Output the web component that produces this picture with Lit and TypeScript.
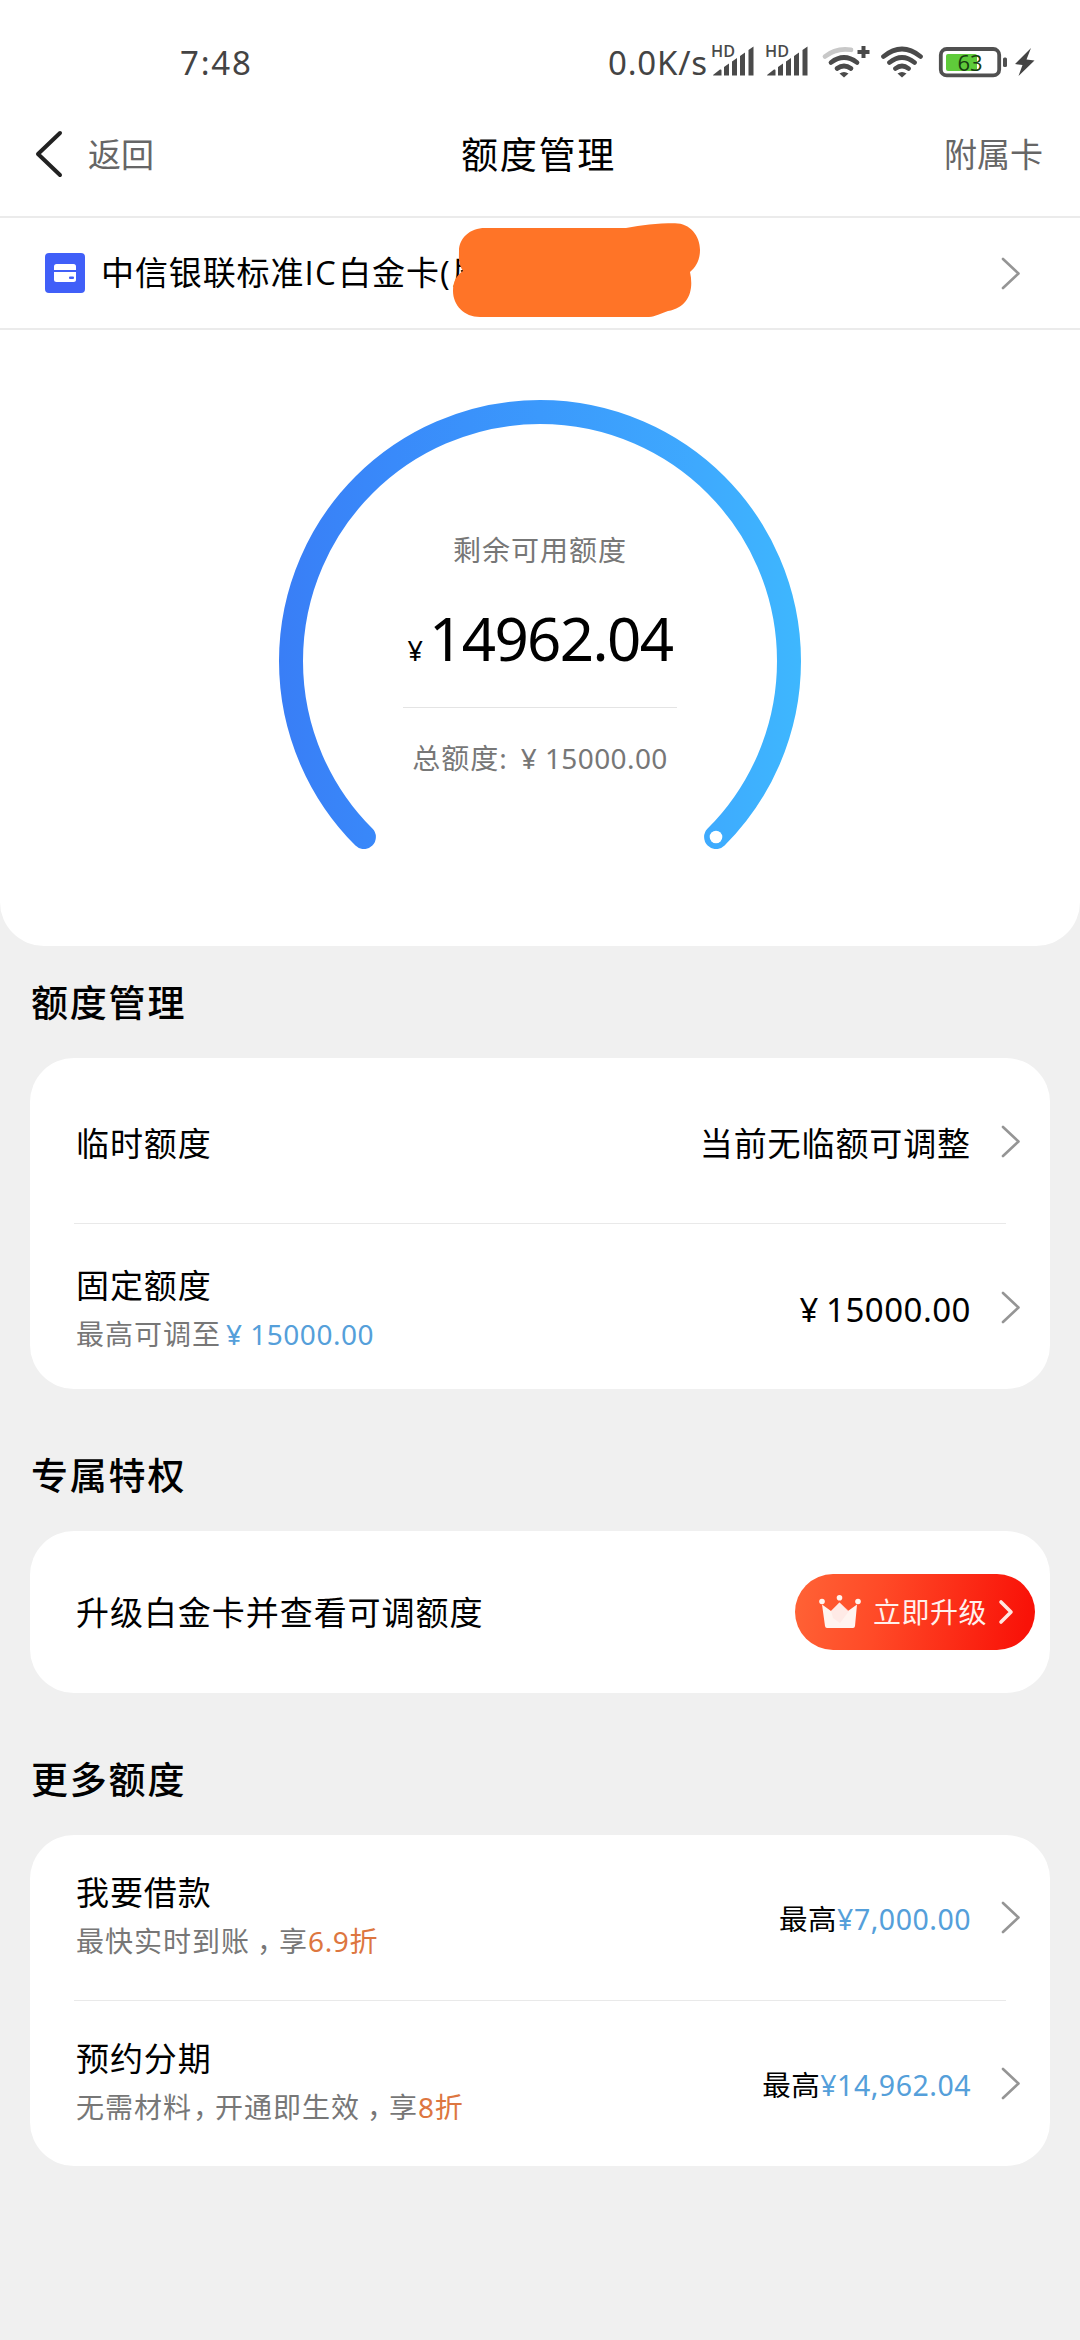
import { LitElement, html, css, svg, nothing } from "lit";
import { customElement, property } from "lit/decorators.js";

const chevron = html`<svg class="chev" width="21" height="35" viewBox="0 0 21 35" fill="none" stroke="#959595" stroke-width="2.6" stroke-linecap="round" stroke-linejoin="round"><path d="M3 3 L18.5 17.5 L3 32" /></svg>`;

@customElement("status-bar")
class StatusBar extends LitElement {
  static styles = css`
    :host { display: flex; align-items: center; height: 124px; padding-left: 180px; color: #444; font-size: 33px; box-sizing: border-box; }
    .time { letter-spacing: 1.8px; width: 428px; }
    .speed { width: 104px; letter-spacing: 0.8px; white-space: nowrap; }
    svg { display: block; margin-top: -2px; font-family: "Open Sans", "Noto Sans", sans-serif; }
  `;

  private signal(x: number) {
    return svg`<g transform="translate(${x} 0)" fill="#4a4a4a">
      <text x="-2" y="16" font-size="16" font-weight="600" textLength="24" lengthAdjust="spacingAndGlyphs">HD</text>
      <path d="M0 34 L7 28.5 Q8.500 28 8.500 29.5 V34.5 H1 Q0 34.5 0 34Z M11 26 L16 22.500 V34.5 H11Z M19 20.5 L24 17 V34.5 H19Z M27 15 L32 11.500 V34.5 H27Z M35.5 9 L40.500 5.5 V34.5 H35.5Z" />
    </g>`;
  }

  render() {
    return html`
      <span class="time">7:48</span>
      <span class="speed">0.0K/s</span>
      <svg width="330" height="40" viewBox="712 41 330 40">
        <g transform="translate(0 41)">${this.signal(713)}${this.signal(767)}</g>
        <g fill="none" stroke="#4a4a4a" stroke-width="4.7" stroke-linecap="round">
          <path d="M825 56.5 Q836 47.5 851 49.8" stroke="#c8c8c8" />
          <path d="M831 62.5 Q844 52.5 857 62.5 M837 68.5 Q844 63.5 851 68.5" />
          <path d="M863.5 46 V58 M857.5 52 H869.5" stroke-linecap="butt" stroke-width="4" />
          <path d="M883.5 56.5 Q902 41.5 920.5 56.5 M889.5 62.5 Q902 52.5 914.5 62.5 M895.5 68.5 Q902 63.5 908.5 68.5" />
        </g>
        <path d="M839.5 73.5 Q844 70.5 848.5 73.5 L844 77.5Z M897.5 73.5 Q902 70.5 906.5 73.5 L902 77.5Z" fill="#4a4a4a" />
        <rect x="946" y="54" width="31" height="17" rx="2" fill="#5fcb3a" />
        <rect x="940.8" y="49" width="58.4" height="26.4" rx="6" fill="none" stroke="#505050" stroke-width="3.8" />
        <rect x="1003" y="57.5" width="4" height="9.5" rx="1.5" fill="#505050" />
        <text x="957.500" y="70.500" font-size="22" fill="#173d10">63</text>
        <path d="M1031 48 L1015 64 L1022.5 65 L1018.5 76 L1034.5 60.5 L1026.5 59.5Z" fill="#444" />
      </svg>
    `;
  }
}

@customElement("nav-bar")
class NavBar extends LitElement {
  static styles = css`
    :host { display: grid; grid-template-columns: 1fr auto 1fr; align-items: center; height: 94px; padding: 0 37px 32px 34px; box-sizing: border-box; border-bottom: 2px solid #ebebeb; background: #fff; font-size: 33px; color: #666; line-height: 48px; }
    .back { display: flex; align-items: center; gap: 24px; }
    .title { color: #000; font-size: 37px; letter-spacing: 1.7px; }
    .extra { text-align: right; }
    svg { display: block; }
    .title, .extra, .back span { padding-top: 2px; }
  `;
  render() {
    return html`
      <div class="back">
        <svg width="30" height="50" viewBox="0 0 30 50" fill="none" stroke="#222" stroke-width="4" stroke-linecap="round" stroke-linejoin="round"><path d="M26 4 L4 25 L26 46" /></svg>
        <span>返回</span>
      </div>
      <div class="title">额度管理</div>
      <div class="extra">附属卡</div>
    `;
  }
}

@customElement("card-picker")
class CardPicker extends LitElement {
  static styles = css`
    :host { display: flex; align-items: center; height: 112px; padding: 0 59px 0 45px; box-sizing: border-box; border-bottom: 2px solid #ebebeb; background: #fff; position: relative; font-size: 33px; line-height: 48px; }
    .icon { display: block; margin-right: 16px; }
    .name { flex: 1; letter-spacing: 0.9px; white-space: nowrap; font-family: "Open Sans", "Noto Sans CJK SC", sans-serif; }
    .latin { letter-spacing: 1.4px; margin-right: 1px; }
    .paren { letter-spacing: 2.6px; }
    .chev { display: block; }
    .cover { position: absolute; left: 450px; top: 2px; }
  `;
  render() {
    return html`
      <svg class="icon" width="40" height="40" viewBox="0 0 40 40">
        <rect width="40" height="40" rx="4" fill="#405ff8" />
        <path d="M9 17 V13.5 Q9 11 11.5 11 H28.5 Q31 11 31 13.5 V17Z" fill="#fff" />
        <path d="M9 19 H31 V26.5 Q31 29 28.5 29 H11.5 Q9 29 9 26.5Z" fill="#fff" />
        <rect x="24" y="23.5" width="5" height="2.4" rx="1" fill="#405ff8" />
      </svg>
      <span class="name">中信银联标准<span class="latin">IC</span>白金卡<span class="paren">(</span>尾</span>
      ${chevron}
      <svg class="cover" width="252" height="98" viewBox="450 220 252 98">
        <path d="M463 271 C458 263 459 258 459 251 C459 238 470 228 485 228 H626 C642 225 656 223.300 675 223.300 C690 223.300 700 236 700 250 C700 260 696 267 690 272 C694 290 689 307 668 311 C656 315 655 317 646 317 H480 C464 317 453 305 453 291 C453 281 457 275 463 271Z" fill="#ff7427" />
      </svg>
    `;
  }
}

@customElement("limit-gauge")
class LimitGauge extends LitElement {
  static styles = css`
    :host { display: grid; justify-items: center; height: 616px; background: #fff; border-radius: 0 0 44px 44px; padding-top: 69px; box-sizing: border-box; }
    .ring, .texts { grid-area: 1 / 1; }
    .ring { display: block; }
    .texts { display: flex; flex-direction: column; align-items: center; padding-top: 127px; color: #777; line-height: 48px; font-size: 28px; }
    .label { letter-spacing: 1px; }
    .amount { display: flex; align-items: baseline; color: #000; font-size: 60px; line-height: 80px; margin-top: 24px; }
    .yen { font-size: 27px; margin-right: 6px; }
    .num { letter-spacing: -1.6px; }
    .rule { width: 274px; height: 1px; background: #e4e4e4; margin: 16px 0 26px; }
    .total { display: flex; align-items: baseline; letter-spacing: 1px; }
    .total .sum { letter-spacing: 0.4px; margin-left: 13px; }
  `;
  render() {
    return html`
      <svg class="ring" width="524" height="450" viewBox="278 399 524 450">
        <defs>
          <linearGradient id="g" gradientUnits="userSpaceOnUse" x1="279" y1="0" x2="801" y2="0">
            <stop offset="0" stop-color="#397ef6" />
            <stop offset="0.22" stop-color="#398afa" />
            <stop offset="0.5" stop-color="#3b99fc" />
            <stop offset="0.8" stop-color="#3ea9fe" />
            <stop offset="1" stop-color="#3eb7fe" />
          </linearGradient>
        </defs>
        <path d="M363.900 837.100 A249 249 0 1 1 716.100 837.100" fill="none" stroke="url(#g)" stroke-width="24" stroke-linecap="round" />
        <circle cx="716" cy="837" r="6.300" fill="#fff" />
      </svg>
      <div class="texts">
        <div class="label">剩余可用额度</div>
        <div class="amount"><span class="yen">¥</span><span class="num">14962.04</span></div>
        <div class="rule"></div>
        <div class="total"><span>总额度:</span><span class="sum">¥ 15000.00</span></div>
      </div>
    `;
  }
}

@customElement("list-row")
class ListRow extends LitElement {
  @property() label = "";
  @property({ attribute: false }) sub: unknown = nothing;
  @property({ attribute: false }) value: unknown = nothing;
  static styles = css`
    :host { display: flex; align-items: center; height: 165px; padding: 0 29px 0 46px; box-sizing: border-box; line-height: 48px; font-size: 33px; color: #000; }
    .main { flex: 1; padding-bottom: 2px; }
    .value { letter-spacing: 0.9px; margin-right: 29px; padding-top: 1px; white-space: nowrap; }
    :host([low]) .main, :host([low]) .value { padding: 6px 0 0; }
    :host([low]) .chev { margin-top: 2px; }
    .label { letter-spacing: 0.9px; }
    .sub { font-size: 28px; letter-spacing: 1px; color: #777; white-space: nowrap; }
    .sum { letter-spacing: 0.5px; word-spacing: -2px; }
    .chev { display: block; }
    .small { font-size: 28.5px; letter-spacing: 0.5px; }
    .blue { color: #559fda; letter-spacing: 0.5px; }
    .orange { color: #dd7640; letter-spacing: 0.6px; }
    .gap { margin-left: 5px; }
    .comma { display: inline-block; font-feature-settings: "halt"; margin: 0 7px 0 7px; }
    .comma.tight { margin: 0 7px 0 1px; }
  `;
  render() {
    return html`
      <div class="main">
        <div class="label">${this.label}</div>
        ${this.sub === nothing ? nothing : html`<div class="sub">${this.sub}</div>`}
      </div>
      <div class="value">${this.value}</div>
      ${chevron}
    `;
  }
}

@customElement("app-root")
class AppRoot extends LitElement {
  static styles = css`
    :host { display: block; min-height: 2340px; background: #f0f0f0; font-family: "Noto Sans", "Noto Sans CJK SC", sans-serif; color: #000; }
    .top { background: #fff; }
    .wrap { background: #f0f0f0; }
    h2 { margin: 0; padding-left: 31px; font-size: 37px; line-height: 56px; font-weight: 500; letter-spacing: 1.8px; }
    .h1 { padding-top: 29px; }
    .h2 { padding-top: 59px; }
    .card { margin: 0 30px; background: #fff; border-radius: 44px; }
    .c1 { margin-top: 27px; }
    .c2 { margin-top: 27px; }
    .rule { height: 1px; margin: 0 44px; background: #e9e9e9; }
    .promo { display: flex; align-items: center; justify-content: space-between; height: 162px; padding: 0 15px 0 46px; box-sizing: border-box; font-size: 33px; letter-spacing: 0.95px; line-height: 48px; }
    .lead { padding-top: 2px; }
    .btn { display: flex; align-items: center; width: 240px; height: 76px; border-radius: 38px; padding: 0 21px 0 24px; box-sizing: border-box; background: linear-gradient(100deg, #ff6336 0%, #ff4a27 35%, #f91208 95%); color: #fff0ec; font-size: 28px; letter-spacing: 0.5px; }
    .btn .txt { flex: 1; padding-left: 12px; }
  `;
  render() {
    return html`
      <div class="top">
        <status-bar></status-bar>
        <nav-bar></nav-bar>
        <card-picker></card-picker>
      </div>
      <div class="wrap"><limit-gauge></limit-gauge></div>

      <h2 class="h1">额度管理</h2>
      <div class="card c1">
        <list-row low label="临时额度" .value=${"当前无临额可调整"}></list-row>
        <div class="rule"></div>
        <list-row low label="固定额度" .sub=${html`最高可调至<span class="blue gap">¥ 15000.00</span>`} .value=${html`<span class="sum">¥ 15000.00</span>`}></list-row>
      </div>

      <h2 class="h2">专属特权</h2>
      <div class="card c2 promo">
        <span class="lead">升级白金卡并查看可调额度</span>
        <div class="btn">
          <svg width="42" height="36" viewBox="0 0 42 36" fill="#fff4f0">
            <circle cx="3" cy="7.500" r="2.800" /><circle cx="20.500" cy="3.800" r="2.800" /><circle cx="39" cy="7.500" r="2.800" />
            <path d="M3 10.500 L12 17 L20.500 8.500 L29 17 L38 10.500 L36 32 Q35.800 34 34 34 H8 Q6.200 34 6 32Z" />
            <path d="M20.500 8.500 L12 17 L14 24 L21 29 L30 17Z" fill="#ffe3e0" opacity="0.6" />
          </svg>
          <span class="txt">立即升级</span>
          <svg width="16" height="26" viewBox="0 0 16 26" fill="none" stroke="#ffe6e0" stroke-width="3.600" stroke-linecap="round" stroke-linejoin="round"><path d="M3 3 L13 13 L3 23" /></svg>
        </div>
      </div>

      <h2 class="h2">更多额度</h2>
      <div class="card c2">
        <list-row
          label="我要借款"
          .sub=${html`最快实时到账<span class="comma">，</span>享<span class="orange">6.9折</span>`}
          .value=${html`<span class="small">最高<span class="blue">¥7,000.00</span></span>`}
        ></list-row>
        <div class="rule"></div>
        <list-row
          label="预约分期"
          .sub=${html`无需材料<span class="comma tight">，</span>开通即生效<span class="comma">，</span>享<span class="orange">8折</span>`}
          .value=${html`<span class="small">最高<span class="blue">¥14,962.04</span></span>`}
        ></list-row>
      </div>
    `;
  }
}
